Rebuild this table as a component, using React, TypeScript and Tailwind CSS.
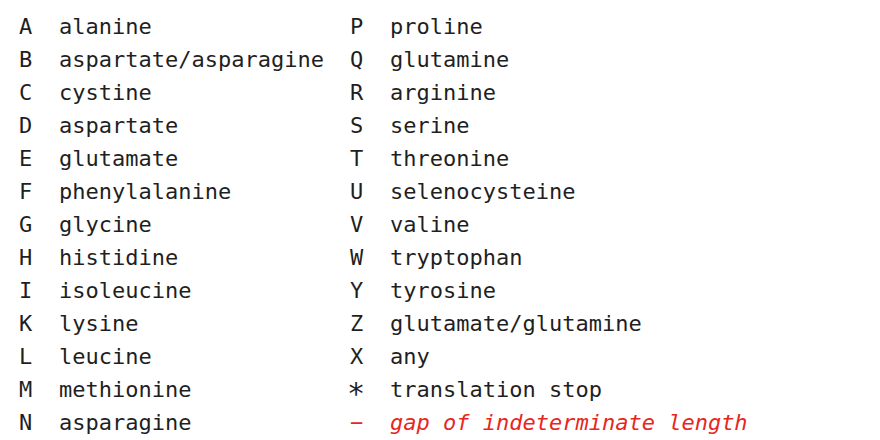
const LEFT: [string, string][] = [
  ['A', 'alanine'],
  ['B', 'aspartate/asparagine'],
  ['C', 'cystine'],
  ['D', 'aspartate'],
  ['E', 'glutamate'],
  ['F', 'phenylalanine'],
  ['G', 'glycine'],
  ['H', 'histidine'],
  ['I', 'isoleucine'],
  ['K', 'lysine'],
  ['L', 'leucine'],
  ['M', 'methionine'],
  ['N', 'asparagine'],
]

const RIGHT: [string, string][] = [
  ['P', 'proline'],
  ['Q', 'glutamine'],
  ['R', 'arginine'],
  ['S', 'serine'],
  ['T', 'threonine'],
  ['U', 'selenocysteine'],
  ['V', 'valine'],
  ['W', 'tryptophan'],
  ['Y', 'tyrosine'],
  ['Z', 'glutamate/glutamine'],
  ['X', 'any'],
]

function Row({ code, name, red }: { code: React.ReactNode; name: string; red?: boolean }) {
  return (
    <div className={`flex h-[33px] items-center ${red ? 'text-[#e8261d]' : ''}`}>
      <span className="w-[40px]">{code}</span>
      <span className={red ? 'italic' : ''}>{name}</span>
    </div>
  )
}

export default function App() {
  return (
    <div className="w-[880px] h-[440px] bg-white text-[#1f1f1f] text-[22px] pl-[19px] pt-[10px] flex font-['DejaVu_Sans_Mono',monospace]">
      <div className="w-[331px]">
        {LEFT.map(([c, n]) => (
          <Row key={c} code={c} name={n} />
        ))}
      </div>
      <div>
        {RIGHT.map(([c, n]) => (
          <Row key={c} code={c} name={n} />
        ))}
        {/* stop codon: asterisk operator sits mid-line like the reference */}
        <Row code={<span className="text-[30px] leading-none -ml-[3px]">∗</span>} name="translation stop" />
        <Row code="−" name="gap of indeterminate length" red />
      </div>
    </div>
  )
}
